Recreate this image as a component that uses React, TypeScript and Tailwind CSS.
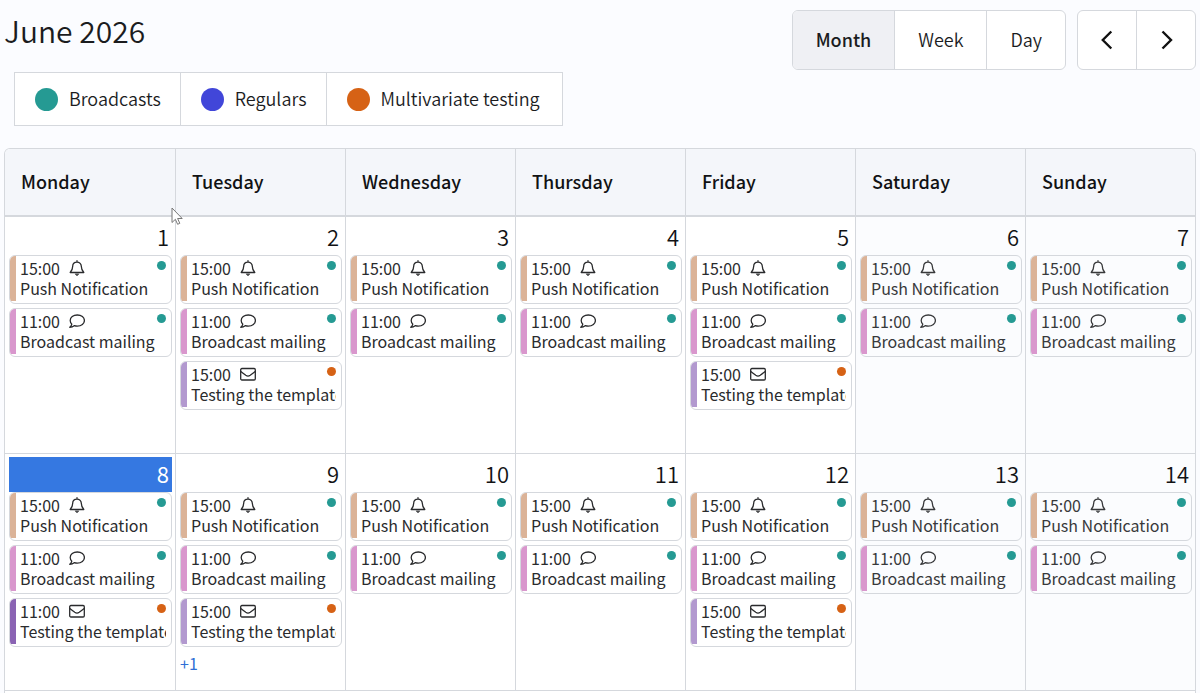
import React, { useState } from 'react';

type EventKind = 'push' | 'broadcast' | 'test';

interface CalendarEvent {
  time: string;
  title: string;
  kind: EventKind;
  bar: string;
  dot: string;
}

interface CalendarDay {
  day: number;
  events: CalendarEvent[];
  more?: number;
}

const weekdays = ['Monday', 'Tuesday', 'Wednesday', 'Thursday', 'Friday', 'Saturday', 'Sunday'];

const legend = [
  { label: 'Broadcasts', color: 'bg-[#259a93]' },
  { label: 'Regulars', color: 'bg-[#4146d9]' },
  { label: 'Multivariate testing', color: 'bg-[#d66215]' },
];

const push: CalendarEvent = {
  time: '15:00',
  title: 'Push Notification',
  kind: 'push',
  bar: 'bg-[#dbb398]',
  dot: 'bg-[#259a93]',
};

const broadcast: CalendarEvent = {
  time: '11:00',
  title: 'Broadcast mailing',
  kind: 'broadcast',
  bar: 'bg-[#d997cd]',
  dot: 'bg-[#259a93]',
};

const test: CalendarEvent = {
  time: '15:00',
  title: 'Testing the template',
  kind: 'test',
  bar: 'bg-[#b299cf]',
  dot: 'bg-[#d66215]',
};

const morningTest: CalendarEvent = { ...test, time: '11:00', bar: 'bg-[#8a63b3]' };

const TODAY = 8;

const weeks: CalendarDay[][] = [
  [
    { day: 1, events: [push, broadcast] },
    { day: 2, events: [push, broadcast, test] },
    { day: 3, events: [push, broadcast] },
    { day: 4, events: [push, broadcast] },
    { day: 5, events: [push, broadcast, test] },
    { day: 6, events: [push, broadcast] },
    { day: 7, events: [push, broadcast] },
  ],
  [
    { day: 8, events: [push, broadcast, morningTest] },
    { day: 9, events: [push, broadcast, test], more: 1 },
    { day: 10, events: [push, broadcast] },
    { day: 11, events: [push, broadcast] },
    { day: 12, events: [push, broadcast, test] },
    { day: 13, events: [push, broadcast] },
    { day: 14, events: [push, broadcast] },
  ],
];

const KindIcon: React.FC<{ kind: EventKind }> = ({ kind }) => (
  <svg
    className="h-4 w-4 shrink-0"
    viewBox="0 0 16 16"
    fill="none"
    stroke="currentColor"
    strokeWidth="1.3"
    strokeLinejoin="round"
    strokeLinecap="round"
    aria-hidden="true"
  >
    {kind === 'push' && (
      <>
        <path d="M8 .7v1.4M8 2.1C5.4 2.1 3.700 4 3.700 6.300c0 3.300-1 4.500-2.500 6.200h13.600c-1.500-1.700-2.500-2.900-2.500-6.200C12.300 4 10.600 2.100 8 2.100z" />
        <path d="M6.400 14.200c.3.800.9 1.200 1.600 1.200s1.300-.4 1.600-1.200z" fill="currentColor" strokeWidth=".6" />
      </>
    )}
    {kind === 'broadcast' && (
      <path d="M8.300 2C4.200 2 1.200 4.400 1.200 7.500c0 1.400.6 2.600 1.600 3.600-.2 1.200-1 2.300-2 3.200 1.800 0 3.300-.6 4.400-1.600 1 .3 2 .5 3.100.5 4.100 0 7.100-2.500 7.100-5.700S12.400 2 8.300 2z" />
    )}
    {kind === 'test' && (
      <>
        <rect x=".7" y="2.500" width="14.600" height="11.500" rx="1.200" />
        <path d="M.8 5.400c1.700 1.400 3.400 2.700 5 3.900 1.700 1.200 2.700 1.200 4.400 0 1.600-1.200 3.300-2.500 5-3.900" />
      </>
    )}
  </svg>
);

const EventCard: React.FC<{ event: CalendarEvent }> = ({ event }) => (
  <button
    type="button"
    className="flex h-[49px] w-full overflow-hidden rounded-md border border-[#d5d8dd] text-left text-base leading-5 font-normal"
  >
    <span className={`mb-0.5 w-1.5 shrink-0 self-stretch ${event.bar}`} />
    <span className="mr-[5px] ml-1 block min-w-0 flex-1 overflow-hidden pt-0.5 whitespace-nowrap">
      <span className="flex h-5 items-center">
        {event.time}
        <span className="ml-[9px] flex">
          <KindIcon kind={event.kind} />
        </span>
        <span className={`mb-1.5 ml-auto h-[9px] w-[9px] rounded-full ${event.dot}`} />
      </span>
      <span className="block">{event.title}</span>
    </span>
  </button>
);

const DayCell: React.FC<{ cell: CalendarDay; index: number }> = ({ cell, index }) => {
  const border = index > 0 ? 'border-l' : '';
  const weekend = index > 4 ? 'bg-[#fbfcfe] text-[#38393b]' : 'bg-white text-[#2a2b2d]';
  const today = cell.day === TODAY ? 'bg-[#3578e1] font-normal text-white' : 'text-[#111214]';

  return (
    <td className={`h-[237px] border-b border-[#d5d8dd] pt-[3px] pr-[3px] pl-1 align-top ${border} ${weekend}`}>
      <div className={`h-[35px] pr-[3px] text-right text-[22px] leading-8 ${today}`}>{cell.day}</div>
      <div className="flex flex-col gap-1">
        {cell.events.map((event, i) => (
          <EventCard key={i} event={event} />
        ))}
      </div>
      {cell.more && (
        <button type="button" className="mt-1 block text-base leading-6 font-normal text-[#2f6fd6]">
          +{cell.more}
        </button>
      )}
    </td>
  );
};

const views = ['Month', 'Week', 'Day'];

export default function App() {
  const [view, setView] = useState('Month');

  return (
    <div className="flex h-screen flex-col overflow-hidden bg-[#fbfcff] px-1 font-['Noto_Sans_CJK_SC','Noto_Sans',sans-serif] font-[350] text-[#1b1c1e]">
      <header className="flex items-start justify-between pt-2.5">
        <div>
          <h1 className="text-[30px] leading-10 font-[350]">June 2026</h1>
          <ul className="mt-[22px] ml-2.5 flex border border-[#d5d8dd] bg-white">
            {legend.map((item, i) => (
              <li
                key={item.label}
                className={`flex h-[52px] items-center gap-[11px] pr-[19px] pb-0.5 pl-5 text-lg last:pr-[22px] ${
                  i > 0 ? 'border-l border-[#d5d8dd]' : ''
                }`}
              >
                <span className={`mt-0.5 h-[23px] w-[23px] rounded-full ${item.color}`} />
                {item.label}
              </li>
            ))}
          </ul>
        </div>
        <div className="flex gap-[11px]">
          <div className="flex h-[60px] overflow-hidden rounded-md border border-[#d5d8dd] bg-white text-lg">
            {views.map((name, i) => (
              <button
                key={name}
                type="button"
                onClick={() => setView(name)}
                className={`px-[23px] pb-0.5 ${i > 0 ? 'border-l border-[#d5d8dd]' : ''} ${
                  view === name ? 'bg-[#eff0f4] font-medium' : ''
                }`}
              >
                {name}
              </button>
            ))}
          </div>
          <div className="flex h-[60px] overflow-hidden rounded-md border border-[#d5d8dd] bg-white">
            <button type="button" aria-label="Previous" className="flex w-[58px] items-center justify-center">
              <svg className="h-5 w-5" viewBox="0 0 20 20" fill="none" stroke="#111" strokeWidth="2.4">
                <path d="M14.300 1.500 5.800 10l8.500 8.500" />
              </svg>
            </button>
            <button
              type="button"
              aria-label="Next"
              className="flex w-[59px] items-center justify-center border-l border-[#d5d8dd]"
            >
              <svg className="h-5 w-5" viewBox="0 0 20 20" fill="none" stroke="#111" strokeWidth="2.4">
                <path d="M6.500 1.500 15 10l-8.500 8.500" />
              </svg>
            </button>
          </div>
        </div>
      </header>

      <main className="relative mt-[22px] flex-1 overflow-hidden rounded-t-md border-x border-t border-[#d5d8dd] bg-white">
        <table className="w-full table-fixed border-separate border-spacing-0">
          <thead>
            <tr>
              {weekdays.map((name, i) => (
                <th
                  key={name}
                  scope="col"
                  className={`h-[68px] border-b-2 border-[#d5d8dd] bg-[#f4f6fa] pb-[3px] pl-4 text-left text-lg font-medium text-[#111214] ${
                    i > 0 ? 'border-l' : ''
                  }`}
                >
                  {name}
                </th>
              ))}
            </tr>
          </thead>
          <tbody>
            {weeks.map((week, i) => (
              <tr key={i}>
                {week.map((cell, j) => (
                  <DayCell key={cell.day} cell={cell} index={j} />
                ))}
              </tr>
            ))}
          </tbody>
        </table>
        {/* mouse pointer */}
        <svg className="absolute top-[58px] left-[166px] h-5 w-3" viewBox="0 0 12 20" fill="#fff" stroke="#777" strokeWidth="1">
          <path d="M1 1v14.500l3.400-3.200 2.200 5 2.200-1-2.200-4.800h4.600z" />
        </svg>
      </main>
    </div>
  );
}
